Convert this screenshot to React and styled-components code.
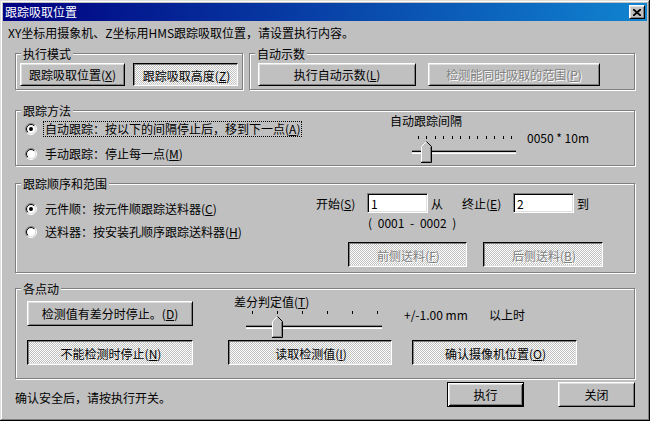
import React from 'react';
import styled, { createGlobalStyle, css } from 'styled-components';

const GlobalStyle = createGlobalStyle`
  * { box-sizing: border-box; }
  html, body { margin: 0; padding: 0; background: #c0c0c0; }
  body {
    font-family: "Noto Sans CJK SC", "Liberation Sans", sans-serif;
    font-size: 12px;
    color: #000;
  }
`;

const Mn = ({ c }) => (
  <>
    (<u>{c}</u>)
  </>
);

const RadioMark = ({ checked }) => (
  <RadioSvg width="12" height="12" viewBox="0 0 12 12">
    <defs>
      <linearGradient id="radioOuter" x1="0" y1="0" x2="1" y2="1">
        <stop offset="0.5" stopColor="#808080" />
        <stop offset="0.5" stopColor="#ffffff" />
      </linearGradient>
      <linearGradient id="radioInner" x1="0" y1="0" x2="1" y2="1">
        <stop offset="0.5" stopColor="#000000" />
        <stop offset="0.5" stopColor="#dfdfdf" />
      </linearGradient>
    </defs>
    <circle cx="6" cy="6" r="5.5" fill="none" stroke="url(#radioOuter)" />
    <circle cx="6" cy="6" r="4.5" fill="#fff" stroke="url(#radioInner)" />
    {checked && <circle cx="6" cy="6" r="2" fill="#000" />}
  </RadioSvg>
);

const Radio = ({ checked, focus, children }) => (
  <RadioRow>
    <RadioMark checked={checked} />
    <RadioText $focus={focus}>{children}</RadioText>
  </RadioRow>
);

// trackbar: ticks on top, sunken channel, thumb pointing up
const Trackbar = ({ width, ticks, value }) => {
  const step = (width - 11) / (ticks - 1);
  const at = i => Math.round(6 + i * step);
  const l = at(value) - 5;
  const r = l + 11;
  return (
    <svg width={width} height={27} viewBox={`0 0 ${width} 27`}>
      {Array.from({ length: ticks }, (_, i) => (
        <rect key={i} x={at(i)} y={0} width={1} height={3} fill="#000" />
      ))}
      <rect x={0} y={14} width={width} height={1} fill="#808080" />
      <rect x={0} y={15} width={width} height={1} fill="#000" />
      <rect x={0} y={16} width={width} height={1} fill="#dfdfdf" />
      <rect x={0} y={17} width={width} height={1} fill="#fff" />
      <polygon points={`${l},26 ${l},10 ${l + 5.5},4.5 ${r},10 ${r},26`} fill="#c0c0c0" />
      <polyline points={`${l + 0.5},25.5 ${l + 0.5},10.5 ${l + 5.5},5.5`} fill="none" stroke="#fff" />
      <polyline points={`${l + 5.5},5.5 ${r - 0.5},10.5 ${r - 0.5},26.5 ${l},26.5`} fill="none" stroke="#000" />
      <polyline points={`${r - 1.5},11 ${r - 1.5},25.5 ${l + 1},25.5`} fill="none" stroke="#808080" />
    </svg>
  );
};

const App = () => (
  <>
    <GlobalStyle />
    <Window>
      <TitleBar>
        <span>跟踪吸取位置</span>
        <CloseButton>
          <svg width="8" height="7" viewBox="0 0 8 7">
            <path d="M0 0 L8 7 M8 0 L0 7" stroke="#000" strokeWidth="1.8" />
          </svg>
        </CloseButton>
      </TitleBar>

      <Body>
        <Intro>XY坐标用摄象机、Z坐标用HMS跟踪吸取位置，请设置执行内容。</Intro>

        <TopRow>
          <GroupBox $w={228}>
            <Legend>执行模式</Legend>
            <ButtonRow $pl={4} $gap={8}>
              <Button $w={105} $h={23}>跟踪吸取位置<Mn c="X" /></Button>
              <Button $w={105} $h={23} $pressed>跟踪吸取高度<Mn c="Z" /></Button>
            </ButtonRow>
          </GroupBox>
          <GroupBox $grow>
            <Legend>自动示数</Legend>
            <ButtonRow $pl={8} $gap={12}>
              <Button $w={158} $h={23}>执行自动示数<Mn c="L" /></Button>
              <Button $w={172} $h={23} disabled>检测能同时吸取的范围<Mn c="P" /></Button>
            </ButtonRow>
          </GroupBox>
        </TopRow>

        <GroupBox $mt={20}>
          <Legend>跟踪方法</Legend>
          <MethodBody>
            <RadioCol $w={365} $mt={4} $gap={9}>
              <Radio checked focus>自动跟踪：按以下的间隔停止后，移到下一点<Mn c="A" /></Radio>
              <Radio>手动跟踪：停止每一点<Mn c="M" /></Radio>
            </RadioCol>
            <IntervalCol>
              <SmallLabel>自动跟踪间隔</SmallLabel>
              <TrackRow $ml={22}>
                <TrackWrap>
                  <Trackbar width={104} ticks={12} value={1} />
                </TrackWrap>
                <TrackValue $ml={11} $mt={5}>0050 * 10m</TrackValue>
              </TrackRow>
            </IntervalCol>
          </MethodBody>
        </GroupBox>

        <GroupBox $mt={17}>
          <Legend>跟踪顺序和范围</Legend>
          <OrderBody>
            <RadioCol $w={291} $mt={11} $gap={7}>
              <Radio checked>元件顺：按元件顺跟踪送料器<Mn c="C" /></Radio>
              <Radio>送料器：按安装孔顺序跟踪送料器<Mn c="H" /></Radio>
            </RadioCol>
            <RangeCol>
              <RangeRow>
                <FieldLabel>开始<Mn c="S" /></FieldLabel>
                <TextField readOnly value="1" />
                <Suffix $w={31}>从</Suffix>
                <FieldLabel>终止<Mn c="E" /></FieldLabel>
                <TextField readOnly value="2" />
                <Suffix>到</Suffix>
              </RangeRow>
              <RangeHint>( 0001 - 0002 )</RangeHint>
              <FeederRow>
                <Button $w={119} $pressed disabled>前侧送料<Mn c="F" /></Button>
                <Button $w={120} $pressed disabled>后侧送料<Mn c="B" /></Button>
              </FeederRow>
            </RangeCol>
          </OrderBody>
        </GroupBox>

        <GroupBox $mt={15}>
          <Legend>各点动</Legend>
          <PointsBody>
            <PointsRow>
              <Button $w={166} style={{ marginTop: 6 }}>检测值有差分时停止。<Mn c="D" /></Button>
              <SliderBlock>
                <SmallLabel>差分判定值<Mn c="T" /></SmallLabel>
                <TrackWrap $ml={12} $mt={3}>
                  <Trackbar width={136} ticks={6} value={1} />
                </TrackWrap>
              </SliderBlock>
              <TrackValue $ml={22} $mt={14} $w={85}>+/-1.00 mm</TrackValue>
              <TrackValue $mt={14}>以上时</TrackValue>
            </PointsRow>
            <ButtonRow $gaps>
              <Button $w={166} $pressed>不能检测时停止<Mn c="N" /></Button>
              <Button $w={164} $pressed>读取检测值<Mn c="I" /></Button>
              <Button $w={165} $pressed>确认摄像机位置<Mn c="O" /></Button>
            </ButtonRow>
          </PointsBody>
        </GroupBox>

        <Footer>
          <FooterText>确认安全后，请按执行开关。</FooterText>
          <Button $w={77} $default>执行</Button>
          <Button $w={77}>关闭</Button>
        </Footer>
      </Body>
    </Window>
  </>
);

export default App;

const Window = styled.div`
  width: 650px;
  height: 421px;
  padding: 3px;
  display: flex;
  flex-direction: column;
  background: #c0c0c0;
  box-shadow: inset -1px -1px #000, inset 1px 1px #dfdfdf,
    inset -2px -2px #808080, inset 2px 2px #fff;
`;

const TitleBar = styled.div`
  height: 18px;
  flex: none;
  display: flex;
  align-items: center;
  justify-content: space-between;
  padding: 0 2px;
  background: linear-gradient(90deg, #000080, #1084d0);
  color: #fff;
  line-height: 12px;
  white-space: nowrap;
`;

const CloseButton = styled.div`
  width: 16px;
  height: 14px;
  display: flex;
  align-items: center;
  justify-content: center;
  background: #c0c0c0;
  border: 1px solid;
  border-color: #fff #000 #000 #fff;
  box-shadow: inset 1px 1px #dfdfdf, inset -1px -1px #808080;
`;

const Body = styled.div`
  flex: 1;
  display: flex;
  flex-direction: column;
  padding: 0 12px 11px 12px;
`;

const Intro = styled.div`
  margin: 5px 0 0 -7px;
  line-height: 14px;
  white-space: nowrap;
`;

const TopRow = styled.div`
  display: flex;
  gap: 6px;
  margin-top: 13px;
`;

const GroupBox = styled.div`
  display: flex;
  flex-direction: column;
  border: 1px solid #808080;
  box-shadow: inset 1px 1px #fff, 1px 1px #fff;
  margin-top: ${p => p.$mt || 0}px;
  ${p => p.$w && `width: ${p.$w}px; flex: none;`}
  ${p => p.$grow && 'flex: 1;'}
`;

const Legend = styled.div`
  align-self: flex-start;
  margin: -7px 0 0 5px;
  padding: 0 2px;
  line-height: 13px;
  background: #c0c0c0;
  white-space: nowrap;
`;

const ButtonRow = styled.div`
  display: flex;
  gap: ${p => p.$gap || 0}px;
  padding: ${p => (p.$gaps ? '2px 0 0 0' : `3px 0 3px ${p.$pl}px`)};
  ${p => p.$gaps && css`
    & > :nth-child(2) { margin-left: 35px; }
    & > :nth-child(3) { margin-left: 20px; }
  `}
`;

const Button = styled.button`
  width: ${p => p.$w}px;
  height: ${p => p.$h || 25}px;
  flex: none;
  padding: 0;
  font: inherit;
  line-height: 12px;
  color: #000;
  white-space: nowrap;
  background: #c0c0c0;
  border: 1px solid;
  border-color: #fff #000 #000 #fff;
  box-shadow: inset 1px 1px #dfdfdf, inset -1px -1px #808080;
  ${p => p.$pressed && css`
    padding: 2px 0 0 2px;
    border-color: #000 #fff #fff #000;
    box-shadow: inset 1px 1px #808080, inset -1px -1px #dfdfdf;
    background: repeating-conic-gradient(#fff 0 25%, #c0c0c0 0 50%) 0 0 / 2px 2px;
  `}
  ${p => p.$default && css`
    border-color: #000;
    box-shadow: inset 1px 1px #fff, inset -1px -1px #000,
      inset 2px 2px #dfdfdf, inset -2px -2px #808080;
  `}
  &:disabled {
    color: #808080;
    text-shadow: 1px 1px #fff;
  }
  u { text-decoration-thickness: 1px; text-underline-offset: 1px; }
`;

const MethodBody = styled.div`
  display: flex;
  padding: 0 0 2px 9px;
`;

const OrderBody = styled.div`
  display: flex;
  padding: 0 0 5px 9px;
`;

const RadioCol = styled.div`
  width: ${p => p.$w}px;
  flex: none;
  display: flex;
  flex-direction: column;
  gap: ${p => p.$gap}px;
  margin-top: ${p => p.$mt}px;
`;

const RadioRow = styled.div`
  display: flex;
  align-items: center;
  height: 16px;
  gap: 6px;
  white-space: nowrap;
`;

const RadioSvg = styled.svg`
  flex: none;
`;

const RadioText = styled.span`
  padding: 0 2px;
  line-height: 16px;
  ${p => p.$focus && 'outline: 1px dotted #000; outline-offset: -1px;'}
`;

const IntervalCol = styled.div`
  display: flex;
  flex-direction: column;
  margin-top: -2px;
`;

const SmallLabel = styled.div`
  line-height: 12px;
  white-space: nowrap;
`;

const TrackRow = styled.div`
  display: flex;
  align-items: flex-start;
  margin-left: ${p => p.$ml}px;
`;

const TrackWrap = styled.div`
  display: flex;
  margin: ${p => (p.$mt != null ? p.$mt : 9)}px 0 0 ${p => p.$ml || 0}px;
`;

const TrackValue = styled.div`
  line-height: 12px;
  white-space: pre;
  margin: ${p => p.$mt}px 0 0 ${p => p.$ml || 0}px;
  ${p => p.$w && `width: ${p.$w}px; flex: none;`}
`;

const RangeCol = styled.div`
  display: flex;
  flex-direction: column;
  margin-top: 3px;
`;

const RangeRow = styled.div`
  display: flex;
  align-items: center;
  height: 20px;
`;

const FieldLabel = styled.span`
  width: 51px;
  flex: none;
  white-space: nowrap;
`;

const TextField = styled.input`
  width: 61px;
  height: 20px;
  flex: none;
  padding: 0 3px;
  font: inherit;
  line-height: 14px;
  background: #fff;
  border: 1px solid;
  border-color: #808080 #fff #fff #808080;
  box-shadow: inset 1px 1px #000, inset -1px -1px #dfdfdf;
  outline: none;
`;

const Suffix = styled.span`
  margin-left: 3px;
  ${p => p.$w && `width: ${p.$w}px; flex: none;`}
`;

const RangeHint = styled.div`
  margin: 4px 0 0 52px;
  line-height: 12px;
  white-space: pre;
  word-spacing: 3px;
`;

const FeederRow = styled.div`
  display: flex;
  gap: 16px;
  margin: 13px 0 0 32px;
`;

const PointsBody = styled.div`
  display: flex;
  flex-direction: column;
  padding: 0 0 13px 11px;
`;

const PointsRow = styled.div`
  display: flex;
  align-items: flex-start;
`;

const SliderBlock = styled.div`
  display: flex;
  flex-direction: column;
  margin: 1px 0 0 41px;
`;

const Footer = styled.div`
  display: flex;
  align-items: flex-start;
  gap: 34px;
  margin-top: 3px;
`;

const FooterText = styled.div`
  flex: 1;
  margin-top: 10px;
  line-height: 12px;
  white-space: nowrap;
`;
